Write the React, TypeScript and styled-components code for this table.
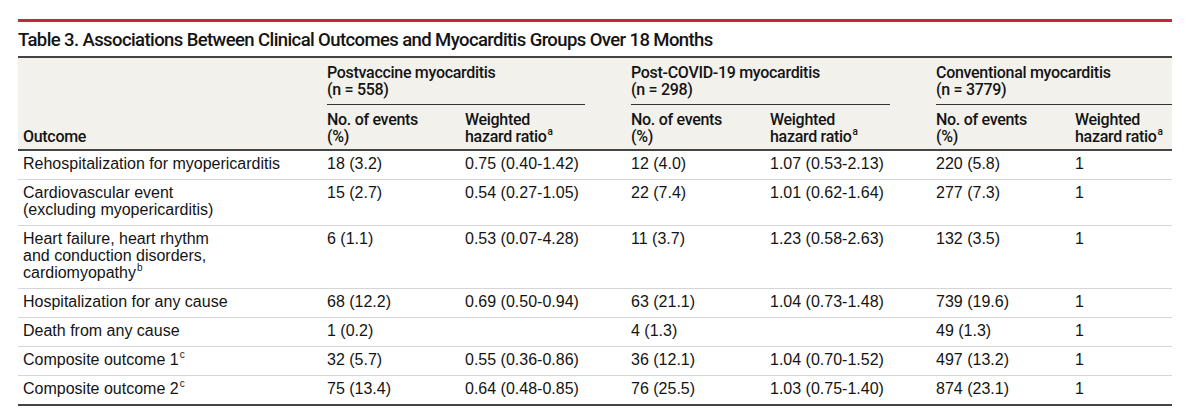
import React from 'react';
import styled, { createGlobalStyle } from 'styled-components';

const GlobalStyle = createGlobalStyle`
  html, body {
    margin: 0;
    padding: 0;
    background: #fff;
  }
  body {
    font-family: "Liberation Sans", Arial, sans-serif;
    color: #141414;
  }
`;

const Page = styled.div`
  width: 1154px;
  padding: 19px 0 0 18px;
`;

const RedRule = styled.div`
  height: 3px;
  background: #c8243a;
`;

const Title = styled.h2`
  margin: 6px 0 4px;
  font-family: Roboto, "Liberation Sans", Arial, sans-serif;
  font-size: 18.5px;
  line-height: 24px;
  font-weight: 500;
  letter-spacing: -0.6px;
  color: #141414;
`;

const Table = styled.table`
  width: 1154px;
  table-layout: fixed;
  border-collapse: collapse;
  border-top: 2px solid #444;
  border-bottom: 2px solid #444;
  font-size: 16px;
  line-height: 17px;
`;

const Head = styled.thead`
  background: #f2f1ec;
  border-bottom: 2px solid #444;
`;

const HeadCell = styled.th<{ $first?: boolean }>`
  text-align: left;
  vertical-align: bottom;
  font-family: Roboto, "Liberation Sans", Arial, sans-serif;
  font-weight: 500;
  font-size: 16px;
  letter-spacing: -0.3px;
  padding: 6px 0 4px ${(p) => (p.$first ? '5px' : '0')};
`;

const GroupCell = styled.th`
  text-align: left;
  vertical-align: top;
  font-family: Roboto, "Liberation Sans", Arial, sans-serif;
  font-weight: 500;
  font-size: 16px;
  letter-spacing: -0.3px;
  padding: 6px 0 0;
`;

const GroupLabel = styled.div<{ $last?: boolean }>`
  padding-bottom: 6px;
  margin-right: ${(p) => (p.$last ? '0' : '46px')};
  border-bottom: 1px solid #333;
`;

const Row = styled.tr`
  border-bottom: 1px solid #d6d6d6;
  &:last-child {
    border-bottom: none;
  }
`;

const Cell = styled.td<{ $first?: boolean }>`
  vertical-align: top;
  padding: 4px 0 7px ${(p) => (p.$first ? '5px' : '0')};
`;

const Sup = styled.sup`
  font-size: 10px;
  line-height: 0;
  position: relative;
  top: -1px;
  margin-left: 1px;
`;

type Group = { name: string; n: string; last?: boolean };

const groups: Group[] = [
  { name: 'Postvaccine myocarditis', n: '(n = 558)' },
  { name: 'Post-COVID-19 myocarditis', n: '(n = 298)' },
  { name: 'Conventional myocarditis', n: '(n = 3779)', last: true },
];

type Outcome = { label: React.ReactNode; values: string[] };

const outcomes: Outcome[] = [
  {
    label: 'Rehospitalization for myopericarditis',
    values: ['18 (3.2)', '0.75 (0.40-1.42)', '12 (4.0)', '1.07 (0.53-2.13)', '220 (5.8)', '1'],
  },
  {
    label: (
      <>
        Cardiovascular event
        <br />
        (excluding myopericarditis)
      </>
    ),
    values: ['15 (2.7)', '0.54 (0.27-1.05)', '22 (7.4)', '1.01 (0.62-1.64)', '277 (7.3)', '1'],
  },
  {
    label: (
      <>
        Heart failure, heart rhythm
        <br />
        and conduction disorders,
        <br />
        cardiomyopathy<Sup>b</Sup>
      </>
    ),
    values: ['6 (1.1)', '0.53 (0.07-4.28)', '11 (3.7)', '1.23 (0.58-2.63)', '132 (3.5)', '1'],
  },
  {
    label: 'Hospitalization for any cause',
    values: ['68 (12.2)', '0.69 (0.50-0.94)', '63 (21.1)', '1.04 (0.73-1.48)', '739 (19.6)', '1'],
  },
  {
    label: 'Death from any cause',
    values: ['1 (0.2)', '', '4 (1.3)', '', '49 (1.3)', '1'],
  },
  {
    label: (
      <>
        Composite outcome 1<Sup>c</Sup>
      </>
    ),
    values: ['32 (5.7)', '0.55 (0.36-0.86)', '36 (12.1)', '1.04 (0.70-1.52)', '497 (13.2)', '1'],
  },
  {
    label: (
      <>
        Composite outcome 2<Sup>c</Sup>
      </>
    ),
    values: ['75 (13.4)', '0.64 (0.48-0.85)', '76 (25.5)', '1.03 (0.75-1.40)', '874 (23.1)', '1'],
  },
];

const widths = [309, 138, 166, 139, 166, 139, 97];

const App: React.FC = () => {
  return (
    <Page>
      <GlobalStyle />
      <RedRule />
      <Title>Table 3. Associations Between Clinical Outcomes and Myocarditis Groups Over 18 Months</Title>
      <Table>
        <colgroup>
          {widths.map((w, i) => (
            <col key={i} style={{ width: w }} />
          ))}
        </colgroup>
        <Head>
          <tr>
            <HeadCell $first rowSpan={2}>
              Outcome
            </HeadCell>
            {groups.map((g) => (
              <GroupCell key={g.name} colSpan={2}>
                <GroupLabel $last={g.last}>
                  {g.name}
                  <br />
                  {g.n}
                </GroupLabel>
              </GroupCell>
            ))}
          </tr>
          <tr>
            {groups.map((g) => (
              <React.Fragment key={g.name}>
                <HeadCell>
                  No. of events
                  <br />
                  (%)
                </HeadCell>
                <HeadCell>
                  Weighted
                  <br />
                  hazard ratio<Sup>a</Sup>
                </HeadCell>
              </React.Fragment>
            ))}
          </tr>
        </Head>
        <tbody>
          {outcomes.map((o, i) => (
            <Row key={i}>
              <Cell $first>{o.label}</Cell>
              {o.values.map((v, j) => (
                <Cell key={j}>{v}</Cell>
              ))}
            </Row>
          ))}
        </tbody>
      </Table>
    </Page>
  );
};

export default App;
